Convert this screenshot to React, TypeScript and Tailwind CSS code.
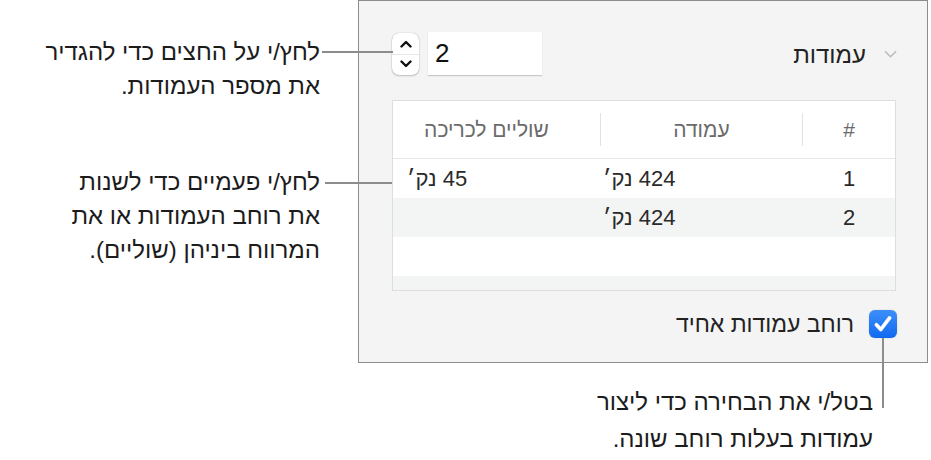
import React from "react";

const Line = ({ className }: { className: string }) => (
  <div className={"relative z-10 h-[2px] shrink-0 bg-[#8c8c8c] " + className} />
);

const ChevronUp = () => (
  <svg viewBox="0 0 12 8" className="h-[8px] w-[12px]" fill="none" stroke="#111" strokeWidth="2.4" strokeLinecap="round" strokeLinejoin="round">
    <path d="M1.5 6.5 6 2l4.5 4.5" />
  </svg>
);

const ChevronDown = ({ color = "#111", w = 12, h = 8, sw = 2.4 }: { color?: string; w?: number; h?: number; sw?: number }) => (
  <svg viewBox="0 0 12 8" width={w} height={h} fill="none" stroke={color} strokeWidth={sw} strokeLinecap="round" strokeLinejoin="round">
    <path d="M1.5 1.5 6 6l4.5-4.5" />
  </svg>
);

const rows = [
  { n: "1", col: "424 נק׳", gap: "45 נק׳", bg: "bg-white" },
  { n: "2", col: "424 נק׳", gap: "", bg: "bg-[#f3f4f4]" },
  { n: "", col: "", gap: "", bg: "bg-white" },
];

export default function App() {
  return (
    <div
      className="flex h-[460px] w-[931px] flex-col bg-white text-[#1c1c1c]"
      style={{ fontFamily: '"Liberation Sans", "DejaVu Sans", sans-serif' }}
    >
      <div className="flex">
        {/* callouts */}
        <div className="flex w-[358px] shrink-0 flex-col">
          <div className="mt-[35px] flex items-start">
            <p dir="rtl" className="w-[320px] shrink-0 text-right text-[24px] leading-[34px]">
              לחץ/י על החצים כדי להגדיר
              <br />
              את מספר העמודות.
            </p>
            <Line className="ml-[2px] mt-[16px] w-[71px]" />
          </div>
          <div className="mt-[62px] flex items-start">
            <p dir="rtl" className="w-[320px] shrink-0 text-right text-[24px] leading-[34px]">
              לחץ/י פעמיים כדי לשנות
              <br />
              את רוחב העמודות או את
              <br />
              המרווח ביניהן (שוליים).
            </p>
            <Line className="ml-[5px] mt-[17px] w-[67px]" />
          </div>
        </div>

        {/* panel */}
        <div dir="rtl" className="h-[363px] w-[570px] shrink-0 border border-[#8c8c8c] bg-[#f4f4f4] pl-[33px] pr-[31px] pt-[31px]">
          <div className="flex h-[43px] items-center justify-between">
            <div className="flex items-center gap-[16px] pt-[2px]">
              <span className="-mr-[3px]">
                <ChevronDown color="#bcbcbc" w={17} h={9} sw={1.4} />
              </span>
              <span className="text-[24px] text-[#222]">עמודות</span>
            </div>
            <div className="flex items-center gap-[9px]">
              <div className="flex h-[43px] w-[114px] items-center bg-white pl-[7px] text-[26px] text-[#111] shadow-[0_1px_1px_rgba(0,0,0,0.18)]" dir="ltr">
                2
              </div>
              <div className="flex h-[42px] w-[27px] flex-col items-center rounded-[7px] bg-white shadow-[0_0_1px_rgba(0,0,0,0.35),0_1px_2px_rgba(0,0,0,0.2)]">
                <div className="flex h-[21px] items-center justify-center pt-[2px]">
                  <ChevronUp />
                </div>
                <div className="h-px w-full bg-[#e6e6e6]" />
                <div className="flex h-[20px] items-center justify-center pb-[2px]">
                  <ChevronDown />
                </div>
              </div>
            </div>
          </div>

          {/* table */}
          <div className="mt-[25px] h-[191px] border border-[#dedede] bg-[#f3f4f4]">
            <div className="grid h-[58px] grid-cols-[92px_1px_201px_1px_1fr] items-center border-b border-[#e6e6e6] bg-white text-[21px] text-[#6b6b6b]">
              <div className="text-center">#</div>
              <div className="h-[33px] bg-[#e2e2e2]" />
              <div className="text-center">עמודה</div>
              <div className="h-[33px] bg-[#e2e2e2]" />
              <div className="pr-[20px] text-center">שוליים לכריכה</div>
            </div>
            {rows.map((r, i) => (
              <div key={i} className={"grid h-[39px] grid-cols-[92px_1px_201px_1px_1fr] items-center text-[22px] text-[#2a2a2a] " + r.bg}>
                <div className="text-center">{r.n}</div>
                <div />
                <div className="pl-[2px] text-left">{r.col}</div>
                <div />
                <div className="pl-[14px] text-left">{r.gap}</div>
              </div>
            ))}
          </div>

          {/* checkbox */}
          <div className="mt-[16px] flex items-center gap-[15px]">
            <div className="relative -mr-[1px] flex h-[28px] w-[28px] items-center justify-center rounded-[6px] bg-gradient-to-b from-[#3c8ff8] to-[#0f69f1] shadow-[0_0_1px_rgba(0,0,0,0.4)]">
              <svg viewBox="0 0 16 16" className="h-[22px] w-[22px]" fill="none" stroke="white" strokeWidth="2.7" strokeLinecap="round" strokeLinejoin="round">
                <path d="M3.2 8.6 6.4 12 12.8 3.6" />
              </svg>
              <div className="absolute left-[13px] top-[28px] h-[70px] w-[2px] bg-[#8c8c8c]" />
            </div>
            <span className="text-[23px] text-[#222]">רוחב עמודות אחיד</span>
          </div>
        </div>
      </div>

      {/* bottom callout */}
      <div className="mt-[20px] flex justify-end pr-[58px]">
        <p dir="rtl" className="text-right text-[24px] leading-[37px]">
          בטל/י את הבחירה כדי ליצור
          <br />
          עמודות בעלות רוחב שונה.
        </p>
      </div>
    </div>
  );
}
